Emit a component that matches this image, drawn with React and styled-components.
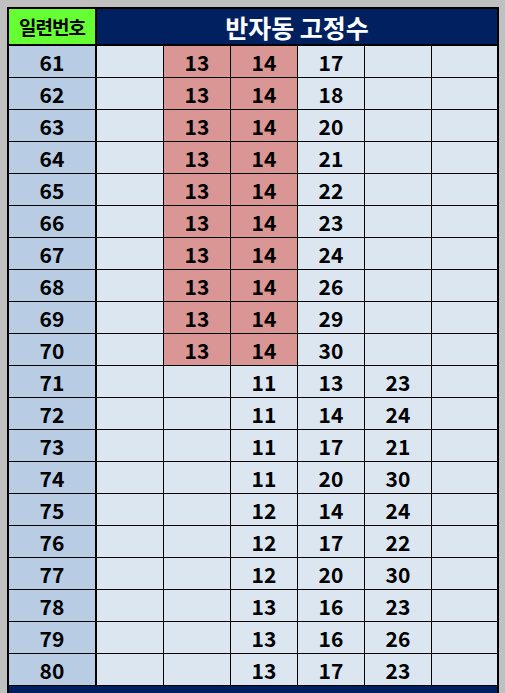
import React from "react";
import styled, { createGlobalStyle } from "styled-components";

const Global = createGlobalStyle`
  html, body { margin: 0; padding: 0; overflow: hidden; background: #c0c0c0; }
  body { padding: 7px 0 0 7px; font-family: "Noto Sans CJK KR", "Noto Sans", sans-serif; }
`;

const Sheet = styled.div`
  width: 488px;
  border: 2px solid #000;
  background: #000;
  display: grid;
  grid-template-columns: 87px 66px 66px 66px 66px 66px 65px;
  grid-auto-rows: 31px;
  grid-template-rows: 36px;
  gap: 1px;
`;

const Cell = styled.div`
  display: flex;
  align-items: center;
  justify-content: center;
  background: ${(p) => (p.$red ? "#da9694" : "#dce6f1")};
  color: #000;
  font-weight: 700;
  font-size: 21px;
  line-height: 1;
  padding-top: 1px;
  box-sizing: border-box;
`;

const IdCell = styled(Cell)`
  background: #b8cce4;
  border-right: 1px solid #000;
`;

const SerialHead = styled.div`
  background: #66ff33;
  border-right: 1px solid #000;
  border-bottom: 1px solid #000;
  display: flex;
  align-items: center;
  justify-content: center;
  font-size: 19px;
  font-weight: 700;
  color: #000;
  letter-spacing: -1px;
`;

const TitleHead = styled.div`
  grid-column: 2 / span 6;
  background: #002060;
  border-bottom: 1px solid #000;
  display: flex;
  align-items: center;
  justify-content: center;
  color: #fff;
  font-size: 25px;
  font-weight: 700;
`;

const NextBand = styled.div`
  grid-column: 1 / span 7;
  height: 36px;
  background: #002060;
`;

const rows = [
  [61, ["", 13, 14, 17, "", ""]],
  [62, ["", 13, 14, 18, "", ""]],
  [63, ["", 13, 14, 20, "", ""]],
  [64, ["", 13, 14, 21, "", ""]],
  [65, ["", 13, 14, 22, "", ""]],
  [66, ["", 13, 14, 23, "", ""]],
  [67, ["", 13, 14, 24, "", ""]],
  [68, ["", 13, 14, 26, "", ""]],
  [69, ["", 13, 14, 29, "", ""]],
  [70, ["", 13, 14, 30, "", ""]],
  [71, ["", "", 11, 13, 23, ""]],
  [72, ["", "", 11, 14, 24, ""]],
  [73, ["", "", 11, 17, 21, ""]],
  [74, ["", "", 11, 20, 30, ""]],
  [75, ["", "", 12, 14, 24, ""]],
  [76, ["", "", 12, 17, 22, ""]],
  [77, ["", "", 12, 20, 30, ""]],
  [78, ["", "", 13, 16, 23, ""]],
  [79, ["", "", 13, 16, 26, ""]],
  [80, ["", "", 13, 17, 23, ""]],
];

export default function App() {
  return (
    <>
      <Global />
      <Sheet>
        <SerialHead>일련번호</SerialHead>
        <TitleHead>반자동 고정수</TitleHead>
        {rows.map(([id, vals]) => (
          <React.Fragment key={id}>
            <IdCell>{id}</IdCell>
            {vals.map((v, i) => (
              <Cell key={i} $red={id <= 70 && (i === 1 || i === 2)}>
                {v}
              </Cell>
            ))}
          </React.Fragment>
        ))}
        <NextBand />
      </Sheet>
    </>
  );
}
